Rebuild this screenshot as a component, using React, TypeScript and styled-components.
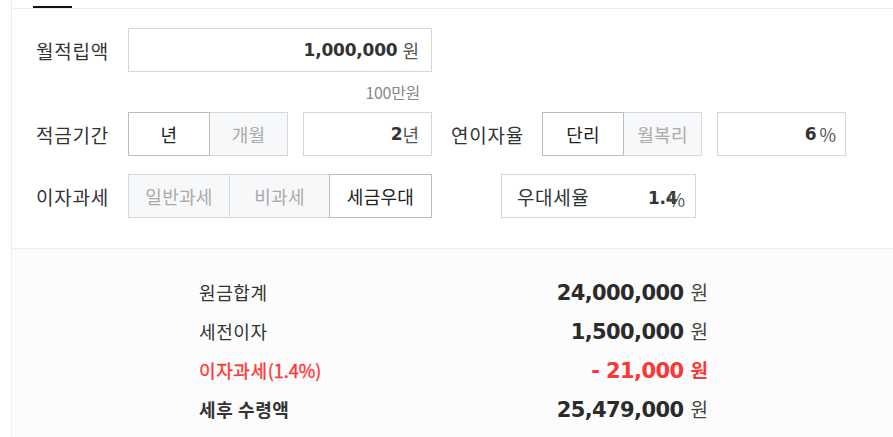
import styled, { createGlobalStyle } from "styled-components";

const GlobalStyle = createGlobalStyle`
  body {
    margin: 0;
    background: #fff;
    font-family: "Noto Sans CJK KR", "Noto Sans", sans-serif;
    color: #333;
  }
`;

const Page = styled.div`
  margin-left: 11px;
  border-left: 1px solid #ececec;
  min-height: 437px;
`;

const TabBar = styled.div`
  height: 8px;
  border-bottom: 1px solid #eeeeee;
  padding-left: 21px;
`;

const ActiveTab = styled.div`
  width: 39px;
  height: 8px;
  border-bottom: 2px solid #111;
  box-sizing: border-box;
`;

const Form = styled.div`
  padding: 19px 0 30px 24px;
  border-bottom: 1px solid #eeeeee;
`;

const Row = styled.div<{ $gap?: number }>`
  display: flex;
  align-items: center;
  height: 44px;
  margin-bottom: ${(p) => p.$gap ?? 0}px;
`;

const Label = styled.div<{ $width?: number }>`
  width: ${(p) => p.$width ?? 92}px;
  flex-shrink: 0;
  font-size: 19px;
  letter-spacing: 0.8px;
  color: #333;
`;

const Segment = styled.div`
  display: flex;
  height: 44px;
`;

const SegButton = styled.div<{ $on?: boolean; $width: number }>`
  width: ${(p) => p.$width}px;
  box-sizing: border-box;
  display: flex;
  align-items: center;
  justify-content: center;
  font-size: 18px;
  letter-spacing: 0.3px;
  color: ${(p) => (p.$on ? "#222" : "#aaa")};
  background: ${(p) => (p.$on ? "#fff" : "#f7f8fa")};
  border: 1px solid ${(p) => (p.$on ? "#bdbdbd" : "#d6d9dd")};
  & + & {
    margin-left: -1px;
  }
  position: relative;
  z-index: ${(p) => (p.$on ? 1 : 0)};
`;

const Field = styled.div<{ $width: number; $left?: number; $pad?: number }>`
  width: ${(p) => p.$width}px;
  margin-left: ${(p) => p.$left ?? 0}px;
  height: 44px;
  box-sizing: border-box;
  border: 1px solid #d6d6d6;
  display: flex;
  align-items: center;
  justify-content: flex-end;
  padding-right: ${(p) => p.$pad ?? 12}px;
  background: #fff;
`;

const Value = styled.span`
  font-family: "DejaVu Sans", Verdana, sans-serif;
  font-weight: 700;
  font-size: 17px;
  color: #333;
  letter-spacing: -0.2px;
`;

const Unit = styled.span<{ $gap?: number }>`
  font-size: 18px;
  color: #555;
  margin-left: ${(p) => p.$gap ?? 0}px;
`;

const Hint = styled.div`
  width: 384px;
  height: 40px;
  line-height: 40px;
  text-align: right;
  font-size: 16px;
  color: #888;
  letter-spacing: -0.3px;
`;

const RateBox = styled.div`
  width: 195px;
  height: 44px;
  margin-left: 69px;
  box-sizing: border-box;
  border: 1px solid #d6d6d6;
  display: flex;
  align-items: center;
  justify-content: space-between;
  padding: 0 10px 0 15px;
`;

const RateName = styled.span`
  font-size: 19px;
  color: #333;
  letter-spacing: 0.6px;
`;

const Overlap = styled.span`
  font-size: 18px;
  color: #555;
  margin-left: -9px;
  position: relative;
  top: 3px;
`;

const Results = styled.div`
  background: #fcfcfc;
  padding: 23px 0 20px 187px;
`;

const ResultRow = styled.div<{ $tone?: "red" | "strong" }>`
  width: 509px;
  height: 39px;
  display: flex;
  align-items: center;
  justify-content: space-between;
  color: ${(p) => (p.$tone === "red" ? "#ff3535" : "#333")};
`;

const ResultLabel = styled.span<{ $weight?: number; $stroke?: boolean }>`
  font-size: 18px;
  font-weight: ${(p) => p.$weight ?? 400};
  letter-spacing: 0.6px;
  -webkit-text-stroke: ${(p) => (p.$stroke ? "0.35px currentColor" : "0")};
`;

const Small = styled.span`
  font-size: 18px;
  letter-spacing: 0;
`;

const Amount = styled.span`
  display: flex;
  align-items: baseline;
`;

const AmountNum = styled.span<{ $red?: boolean }>`
  font-family: "DejaVu Sans", Verdana, sans-serif;
  font-weight: 700;
  font-size: 21px;
  letter-spacing: -0.6px;
  color: ${(p) => (p.$red ? "#ff3535" : "#2b2b2b")};
`;

const AmountUnit = styled.span<{ $red?: boolean }>`
  font-size: 19px;
  margin-left: 7px;
  font-weight: ${(p) => (p.$red ? 700 : 400)};
  color: ${(p) => (p.$red ? "#ff3535" : "#444")};
`;

const results = [
  { label: "원금합계", value: "24,000,000", weight: 400 },
  { label: "세전이자", value: "1,500,000", weight: 400 },
  { label: "이자과세", rate: "(1.4%)", value: "- 21,000", tone: "red" as const, weight: 400 },
  { label: "세후 수령액", value: "25,479,000", tone: "strong" as const, weight: 700 },
];

export default function App() {
  return (
    <>
      <GlobalStyle />
      <Page>
        <TabBar>
          <ActiveTab />
        </TabBar>
        <Form>
          <Row>
            <Label>월적립액</Label>
            <Field $width={304}>
              <Value>1,000,000</Value>
              <Unit $gap={5}>원</Unit>
            </Field>
          </Row>
          <Hint>100만원</Hint>
          <Row $gap={18}>
            <Label>적금기간</Label>
            <Segment>
              <SegButton $on $width={82}>년</SegButton>
              <SegButton $width={79}>개월</SegButton>
            </Segment>
            <Field $width={129} $left={15}>
              <Value>2</Value>
              <Unit>년</Unit>
            </Field>
            <Label $width={91} style={{ marginLeft: 19 }}>연이자율</Label>
            <Segment>
              <SegButton $on $width={82}>단리</SegButton>
              <SegButton $width={79}>월복리</SegButton>
            </Segment>
            <Field $width={129} $left={15} $pad={9}>
              <Value>6</Value>
              <Unit $gap={3}>%</Unit>
            </Field>
          </Row>
          <Row>
            <Label>이자과세</Label>
            <Segment>
              <SegButton $width={102}>일반과세</SegButton>
              <SegButton $width={101}>비과세</SegButton>
              <SegButton $on $width={103}>세금우대</SegButton>
            </Segment>
            <RateBox>
              <RateName>우대세율</RateName>
              <span>
                <Value>1.4</Value>
                <Overlap>%</Overlap>
              </span>
            </RateBox>
          </Row>
        </Form>
        <Results>
          {results.map((r) => (
            <ResultRow key={r.label} $tone={r.tone}>
              <ResultLabel $weight={r.weight} $stroke={r.tone === "red"}>
                {r.label}
                {r.rate && <Small>{r.rate}</Small>}
              </ResultLabel>
              <Amount>
                <AmountNum $red={r.tone === "red"}>{r.value}</AmountNum>
                <AmountUnit $red={r.tone === "red"}>원</AmountUnit>
              </Amount>
            </ResultRow>
          ))}
        </Results>
      </Page>
    </>
  );
}
